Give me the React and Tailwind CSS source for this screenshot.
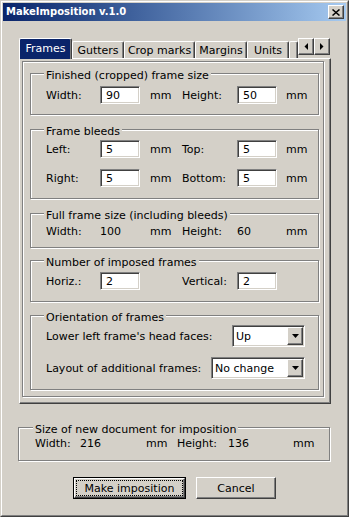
const raisedBtn =
  "border border-t-white border-l-white border-r-[#404040] border-b-[#404040] shadow-[inset_-1px_-1px_0_#808080] bg-[#d4d0c8]";
const sunken =
  "border border-t-[#808080] border-l-[#808080] border-r-white border-b-white shadow-[inset_1px_1px_0_#404040,inset_-1px_-1px_0_#d4d0c8] bg-white";
const etched = "border border-[#808080] shadow-[1px_1px_0_#fff,inset_1px_1px_0_#fff]";

function Group({ label, className, labelLeft, children }) {
  return (
    <div className={`relative ${etched} ${className}`}>
      <span className={`absolute -top-[5px] ${labelLeft || "left-[13px]"} px-[2px] bg-[#d4d0c8] leading-[13px] whitespace-nowrap`}>
        {label}
      </span>
      {children}
    </div>
  );
}

function Input({ value, className = "w-[40px]" }) {
  return (
    <div className={`${sunken} ${className} h-[18px] flex items-center pl-[5px] shrink-0`}>
      {value}
    </div>
  );
}

function Select({ value, className }) {
  return (
    <div className={`${sunken} ${className} h-[22px] p-[1px] flex shrink-0`}>
      <div className="flex-1 flex items-center pl-[2px]">{value}</div>
      <div className={`${raisedBtn} w-[16px] h-full flex items-center justify-center`}>
        <svg width="7" height="4" viewBox="0 0 7 4">
          <polygon points="0,0 7,0 3.5,4" fill="#000" />
        </svg>
      </div>
    </div>
  );
}

function Tab({ label, w, selected }) {
  if (selected) {
    return (
      <div
        className={`${w} h-[21px] -mb-[1px] relative z-10 border-t border-l border-white border-r border-r-[#404040] shadow-[inset_-1px_0_0_#808080] rounded-t-[2px] bg-[#0a246a] text-white flex items-center justify-center pb-[1px] shrink-0`}
      >
        {label}
      </div>
    );
  }
  return (
    <div
      className={`${w} h-[17px] border-t border-l border-white border-r border-r-[#404040] shadow-[inset_-1px_0_0_#808080] rounded-t-[2px] flex items-center justify-center whitespace-nowrap overflow-hidden shrink-0`}
    >
      {label}
    </div>
  );
}

export default function App() {
  return (
    <div className="w-[349px] h-[517px] bg-[#d4d0c8] font-['DejaVu_Sans',Verdana,sans-serif] text-[11px] leading-[13px] text-black select-none overflow-hidden">
      <div className="w-full h-full border border-t-[#d4d0c8] border-l-[#d4d0c8] border-r-[#404040] border-b-[#404040]">
        <div className="w-full h-full border border-t-white border-l-white border-r-[#808080] border-b-[#808080] p-[1px] flex flex-col">
          {/* Title bar */}
          <div className="h-[18px] shrink-0 flex items-center bg-gradient-to-r from-[#0a246a] to-[#a6caf0] pl-[3px] pr-[2px]">
            <span className="text-white font-bold text-[10px] leading-[12px]">MakeImposition v.1.0</span>
            <div className={`ml-auto w-[16px] h-[14px] ${raisedBtn} flex items-center justify-center`}>
              <svg width="8" height="7" viewBox="0 0 8 7">
                <path d="M0.5 0.5 L7.5 6.5 M7.5 0.5 L0.5 6.5" stroke="#000" strokeWidth="1.5" fill="none" />
              </svg>
            </div>
          </div>

          <div className="pl-[16px] pt-[17px] flex flex-col">
            {/* Tabs */}
            <div className="h-[20px] flex items-end">
              <Tab label="Frames" w="w-[53px]" selected />
              <Tab label="Gutters" w="w-[52px]" />
              <Tab label="Crop marks" w="w-[71px]" />
              <Tab label="Margins" w="w-[52px]" />
              <Tab label="Units" w="w-[42px]" />
              <Tab label="" w="w-[9px]" />
              <div className={`${raisedBtn} w-[16px] h-[17px] self-start flex items-center justify-center shrink-0`}>
                <svg width="4" height="7" viewBox="0 0 4 7">
                  <polygon points="4,0 4,7 0.5,3.5" fill="#000" />
                </svg>
              </div>
              <div className={`${raisedBtn} w-[16px] h-[17px] self-start flex items-center justify-center shrink-0`}>
                <svg width="4" height="7" viewBox="0 0 4 7">
                  <polygon points="0,0 0,7 3.5,3.5" fill="#000" />
                </svg>
              </div>
            </div>

            {/* Tab panel */}
            <div className="w-[312px] h-[346px] border-t border-l border-white border-r border-b border-r-[#404040] border-b-[#404040] shadow-[inset_-1px_-1px_0_#808080] p-[2px]">
              <div className={`w-[302px] h-[336px] ${etched} pl-[7px] pt-[11px] flex flex-col`}>
                <Group label="Finished (cropped) frame size" className="w-[289px] h-[42px] pt-[12px]">
                  <div className="flex items-center h-[18px] pl-[15px]">
                    <span className="w-[54px]">Width:</span>
                    <Input value="90" />
                    <span className="ml-[10px] w-[32px]">mm</span>
                    <span className="w-[55px]">Height:</span>
                    <Input value="50" />
                    <span className="ml-[9px]">mm</span>
                  </div>
                </Group>

                <Group label="Frame bleeds" className="w-[289px] h-[70px] mt-[14px] pt-[10px]">
                  <div className="flex items-center h-[18px] pl-[15px]">
                    <span className="w-[54px]">Left:</span>
                    <Input value="5" />
                    <span className="ml-[10px] w-[32px]">mm</span>
                    <span className="w-[55px]">Top:</span>
                    <Input value="5" />
                    <span className="ml-[9px]">mm</span>
                  </div>
                  <div className="flex items-center h-[18px] pl-[15px] mt-[11px]">
                    <span className="w-[54px]">Right:</span>
                    <Input value="5" />
                    <span className="ml-[10px] w-[32px]">mm</span>
                    <span className="w-[55px]">Bottom:</span>
                    <Input value="5" />
                    <span className="ml-[9px]">mm</span>
                  </div>
                </Group>

                <Group label="Full frame size (including bleeds)" className="w-[289px] h-[35px] mt-[14px] pt-[8px]">
                  <div className="flex items-center h-[18px] pl-[15px]">
                    <span className="w-[54px]">Width:</span>
                    <span className="w-[50px]">100</span>
                    <span className="w-[32px]">mm</span>
                    <span className="w-[55px]">Height:</span>
                    <span className="w-[49px]">60</span>
                    <span>mm</span>
                  </div>
                </Group>

                <Group label="Number of imposed frames" className="w-[289px] h-[42px] mt-[12px] pt-[11px]">
                  <div className="flex items-center h-[18px] pl-[15px]">
                    <span className="w-[54px]">Horiz.:</span>
                    <Input value="2" />
                    <span className="w-[42px]" />
                    <span className="w-[55px]">Vertical:</span>
                    <Input value="2" />
                  </div>
                </Group>

                <Group label="Orientation of frames" className="w-[289px] h-[75px] mt-[13px] pt-[9px]">
                  <div className="flex items-center h-[22px] pl-[15px]">
                    <span className="w-[186px]">Lower left frame's head faces:</span>
                    <Select value="Up" className="w-[73px]" />
                  </div>
                  <div className="flex items-center h-[22px] pl-[15px] mt-[10px]">
                    <span className="w-[165px]">Layout of additional frames:</span>
                    <Select value="No change" className="w-[94px]" />
                  </div>
                </Group>
              </div>
            </div>

            {/* Size of new document */}
            <Group
              label="Size of new document for imposition"
              labelLeft="left-[14px]"
              className="w-[312px] h-[34px] -ml-[1px] mt-[23px] pt-[6px]"
            >
              <div className="flex items-center h-[18px] pl-[16px]">
                <span className="w-[45px]">Width:</span>
                <span className="w-[66px]">216</span>
                <span className="w-[31px]">mm</span>
                <span className="w-[51px]">Height:</span>
                <span className="w-[65px]">136</span>
                <span>mm</span>
              </div>
            </Group>

            {/* Buttons */}
            <div className="flex mt-[16px] ml-[54px] gap-[10px]">
              <div className="w-[113px] h-[22px] border border-black">
                <div className={`${raisedBtn} w-full h-full p-[1px]`}>
                  <div className="w-full h-full border border-dotted border-black flex items-center justify-center">
                    Make imposition
                  </div>
                </div>
              </div>
              <div className={`${raisedBtn} w-[80px] h-[22px] flex items-center justify-center`}>Cancel</div>
            </div>
          </div>
        </div>
      </div>
    </div>
  );
}
